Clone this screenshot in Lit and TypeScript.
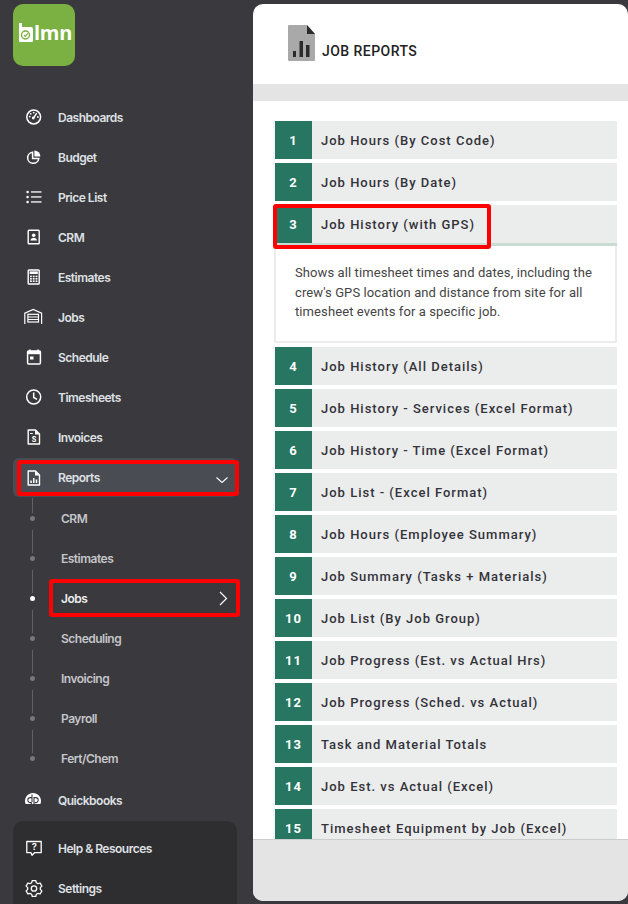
import { LitElement, html, css, svg } from "lit";
import { customElement } from "lit/decorators.js";

const icons: Record<string, unknown> = {
  dash: svg`<circle cx="9.700" cy="10" r="6.900" fill="none" stroke="#fff" stroke-width="1.500"/><path d="M9.700 10.800 12.700 6.200" stroke="#fff" stroke-width="1.500" fill="none"/><circle cx="9.300" cy="11" r="1.400" fill="#fff"/><circle cx="5.700" cy="9.600" r=".9" fill="#fff"/><circle cx="6.700" cy="6.800" r=".9" fill="#fff"/><circle cx="9.700" cy="5.600" r=".9" fill="#fff"/><circle cx="13.900" cy="10" r=".9" fill="#fff"/>`,
  budget: svg`<path d="M8.600 5.200a5.600 5.600 0 1 0 6.200 6.200H8.600Z" fill="none" stroke="#fff" stroke-width="1.500"/><path d="M10.400 3.600a6 6 0 0 1 6 6h-6Z" fill="#fff"/>`,
  list: svg`<g fill="#fff"><circle cx="3.600" cy="5" r="1.300"/><circle cx="3.600" cy="10" r="1.300"/><circle cx="3.600" cy="15" r="1.300"/><rect x="7" y="4.300" width="10.500" height="1.300"/><rect x="7" y="9.300" width="10.500" height="1.300"/><rect x="7" y="14.300" width="10.500" height="1.300"/></g>`,
  crm: svg`<rect x="4.200" y="3.200" width="11" height="13.600" rx=".8" fill="none" stroke="#fff" stroke-width="1.400"/><circle cx="9.700" cy="8.300" r="1.800" fill="#fff"/><path d="M6.400 13.600c.3-2 1.600-2.800 3.300-2.800s3 .8 3.300 2.800Z" fill="#fff"/>`,
  calc: svg`<rect x="4.200" y="3" width="11" height="14" rx=".8" fill="none" stroke="#fff" stroke-width="1.400"/><rect x="5.600" y="4.400" width="8.200" height="2.600" fill="#fff"/><g fill="#fff"><rect x="6" y="8.600" width="1.800" height="1.600"/><rect x="8.800" y="8.600" width="1.800" height="1.600"/><rect x="11.600" y="8.600" width="1.800" height="1.600"/><rect x="6" y="11" width="1.800" height="1.600"/><rect x="8.800" y="11" width="1.800" height="1.600"/><rect x="11.600" y="11" width="1.800" height="1.600"/><rect x="6" y="13.400" width="1.800" height="1.600"/><rect x="8.800" y="13.400" width="1.800" height="1.600"/><rect x="11.600" y="13.400" width="1.800" height="1.600"/></g>`,
  jobs: svg`<path d="M.8 17V6.200L9.200 2.400l8.400 3.800V17" fill="none" stroke="#fff" stroke-width="1.200"/><rect x="3.900" y="7.300" width="10.600" height="7.700" fill="none" stroke="#fff" stroke-width="1.200"/><path d="M3.900 10h10.600M3.900 12.500h10.600" stroke="#fff" stroke-width="1.200"/>`,
  sched: svg`<path d="M6 2.400v3M14 2.400v3" stroke="#fff" stroke-width="1.600"/><rect x="3.600" y="4" width="12.800" height="13" rx="1" fill="none" stroke="#fff" stroke-width="1.500"/><rect x="3.600" y="4" width="12.800" height="3.200" fill="#fff"/><rect x="6" y="9.500" width="3.500" height="3" fill="#fff"/>`,
  clock: svg`<circle cx="9.700" cy="10" r="7" fill="none" stroke="#fff" stroke-width="1.500"/><path d="M9.700 5.500V10.500L13.100 12.300" fill="none" stroke="#fff" stroke-width="1.500"/>`,
  inv: svg`<path d="M4.200 3h7.300l4 4v10H4.200Z" fill="none" stroke="#fff" stroke-width="1.400" stroke-linejoin="round"/><path d="M11 3v4.500h4.500Z" fill="#fff"/><path d="M6 6.500h2.800" stroke="#fff" stroke-width="1"/><text x="9.800" y="15" text-anchor="middle" font-family="Inter,sans-serif" font-size="7" font-weight="700" fill="#fff">S</text>`,
  rep: svg`<path d="M4.200 3h7.300l4 4v10H4.200Z" fill="none" stroke="#fff" stroke-width="1.400" stroke-linejoin="round"/><path d="M11 3v4.500h4.500Z" fill="#fff"/><rect x="6.300" y="12.500" width="1.500" height="2.500" fill="#fff"/><rect x="9" y="10" width="1.500" height="5" fill="#fff"/><rect x="11.700" y="11.500" width="1.500" height="3.500" fill="#fff"/>`,
  qb: svg`<path d="M1.600 14A8 8 0 1 1 16.400 14Z" fill="#fff"/><path d="M8 7.600H6.300a2.500 2.500 0 0 0 0 5H7.300V14M8 4.600V12M10 14V7M10 7.600h1.700a2.500 2.500 0 0 1 0 5H10.800" fill="none" stroke="#3a3a3e" stroke-width="1.100"/>`,
  help: svg`<path d="M2.800 3.500h14.400v11.200H10.500L8 17.200l-1-2.500H2.800Z" fill="none" stroke="#fff" stroke-width="1.300" stroke-linejoin="round"/><text x="10" y="12.300" text-anchor="middle" font-family="Inter,sans-serif" font-size="9.500" font-weight="600" fill="#fff">?</text>`,
  gear: svg`<path d="M8.200 2.600h3.600l.5 2.100 1.800 1 2-.7 1.800 3.100-1.600 1.500v1.800l1.600 1.500-1.800 3.100-2-.7-1.800 1-.5 2.100H8.200l-.5-2.100-1.800-1-2 .7-1.800-3.100 1.600-1.500V9.600L2.100 8.100l1.800-3.100 2 .7 1.800-1Z" fill="none" stroke="#fff" stroke-width="1.300" stroke-linejoin="round"/><circle cx="10" cy="10.500" r="2.700" fill="none" stroke="#fff" stroke-width="1.300"/>`,
};

const top: [string, string][] = [
  ["dash", "Dashboards"], ["budget", "Budget"], ["list", "Price List"], ["crm", "CRM"],
  ["calc", "Estimates"], ["jobs", "Jobs"], ["sched", "Schedule"], ["clock", "Timesheets"], ["inv", "Invoices"],
];
const subs = ["CRM", "Estimates", "Jobs", "Scheduling", "Invoicing", "Payroll", "Fert/Chem"];
const before = ["Job Hours (By Cost Code)", "Job Hours (By Date)"];
const after = [
  "Job History (All Details)", "Job History - Services (Excel Format)", "Job History - Time (Excel Format)",
  "Job List - (Excel Format)", "Job Hours (Employee Summary)", "Job Summary (Tasks + Materials)",
  "Job List (By Job Group)", "Job Progress (Est. vs Actual Hrs)", "Job Progress (Sched. vs Actual)",
  "Task and Material Totals", "Job Est. vs Actual (Excel)", "Timesheet Equipment by Job (Excel)",
];

@customElement("app-root")
export class AppRoot extends LitElement {
  static styles = css`
    :host { display: block; width: 628px; height: 904px; overflow: hidden; background: #3a3a3e; }
    * { box-sizing: border-box; }
    .page { display: flex; height: 904px; }
    .side { width: 253px; flex: none; display: flex; flex-direction: column; font-family: Inter, sans-serif; color: #dfe0e4; font-size: 12px; font-weight: 600; letter-spacing: -.5px; height: 904px; overflow: hidden; }
    .logo { flex: none; margin: 4px 0 0 13px; width: 62px; height: 62px; border-radius: 10px; background: #7bb042; display: flex; align-items: flex-start; justify-content: flex-start; padding: 19px 0 0 6px; color: #fff; font: 700 20px/20px "Open Sans", sans-serif; }
    .logo svg { width: 14px; height: 19px; flex: none; }
    .logo span { letter-spacing: -.3px; margin-left: 1px; }
    nav { margin-top: 31px; display: flex; flex-direction: column; flex: none; }
    .item { height: 40px; display: flex; align-items: center; padding-left: 24px; position: relative; flex: none; }
    .item svg.ico { width: 20px; height: 20px; margin-right: 14px; flex: none; }
    .reports { margin: 1px 16px 0 13px; height: 39px; padding-left: 11px; border-radius: 6px; background: #4a4c54; }
    .reports .chev { position: absolute; left: 203px; top: 19px; width: 12px; height: 6px; }
    .subs { margin-top: 1px; display: flex; flex-direction: column; }
    .sub { height: 40px; display: flex; align-items: center; padding-left: 61px; color: #c4c5c9; position: relative; }
    .sub::before { content: ""; position: absolute; left: 32px; top: -8px; height: 23px; width: 1px; background: #626266; }
    .sub:first-child::before { top: 0; height: 15px; }
    .sub::after { content: ""; position: absolute; left: 30px; top: 18px; width: 5px; height: 5px; border-radius: 50%; background: #77777b; }
    .sub.on { color: #eceded; }
    .sub.on::after { background: #fff; }
    .sub .chev { position: absolute; left: 219px; top: 13px; width: 9px; height: 15px; }
    .qb { margin-top: 2px; }
    .bottom { margin: 1px 16px 0 13px; padding-top: 7px; background: #2e2e30; border-radius: 10px 10px 0 0; flex: 1; }
    .bottom .item { padding-left: 11px; }
    .hl { position: absolute; border: 4px solid #ff0000; border-radius: 3px; pointer-events: none; z-index: 2; }
    .hl-rep { left: 4px; top: 2px; width: 222px; height: 36px; }
    .hl-jobs { left: 49px; top: 1px; width: 191px; height: 38px; }
    .main { width: 375px; height: 897px; margin-top: 4px; flex: none; background: #fff; border-radius: 10px; overflow: hidden; display: flex; flex-direction: column; font-family: Roboto, sans-serif; }
    .head { height: 80px; flex: none; display: flex; align-items: center; padding: 0 0 0 35px; }
    .head svg { width: 27px; height: 36px; margin: 0 7px 2px 0; flex: none; }
    .head b { font: 500 14px Roboto, sans-serif; color: #222; margin-top: 13px; letter-spacing: .45px; }
    .band { height: 17px; flex: none; background: #e4e4e4; }
    .list { flex: 1; overflow: hidden; padding: 20px 11px 0 20px; display: flex; flex-direction: column; min-height: 0; }
    .row { display: flex; flex: none; height: 38px; margin-bottom: 4px; background: #ebecec; border-left: 2px solid #f5f6f6; position: relative; font: 500 13px Roboto, sans-serif; letter-spacing: 1px; color: #33333a; align-items: center; }
    .num { width: 37px; height: 100%; flex: none; background: #277661; color: #fff; display: flex; align-items: center; justify-content: center; font-weight: 700; margin-right: 9px; }
    .row.open { margin-bottom: 0; border-bottom: 3px solid #c8dcd4; height: 41px; }
    .desc { flex: none; height: 97px; margin: 0 0 4px 1px; border: 2px solid #ececec; border-top: 0; padding: 17px 8px 0 19px; font: 400 13px/19.500px Roboto, sans-serif; letter-spacing: .1px; color: #444; }
    .hl-row { left: -2px; top: -1px; width: 218px; height: 45px; }
    .foot { height: 62px; flex: none; background: #e4e4e4; border-top: 1px solid #cdcdcd; }
  `;

  private icon(k: string) {
    return html`<svg class="ico" viewBox="0 0 20 20">${icons[k]}</svg>`;
  }

  private row(n: number, t: string) {
    return html`<div class="row"><div class="num">${n}</div><span>${t}</span></div>`;
  }

  render() {
    return html`<div class="page">
      <aside class="side">
        <div class="logo">
          <svg viewBox="0 0 14 19"><path d="M0 0h3v4h9a2 2 0 0 1 2 2v12a1 1 0 0 1-1 1H1a1 1 0 0 1-1-1Z" fill="#fff"/><circle cx="6.500" cy="12" r="4" fill="none" stroke="#7bb042" stroke-width="1.400"/><path d="M5 12l1.400 1.400 2.400-3" fill="none" stroke="#7bb042" stroke-width="1.200"/></svg>
          <span>lmn</span>
        </div>
        <nav>
          ${top.map(([k, t]) => html`<div class="item">${this.icon(k)}${t}</div>`)}
          <div class="item reports">${this.icon("rep")}Reports
            <svg class="chev" viewBox="0 0 12 6"><path d="M.5.5 6 5.500 11.500.5" fill="none" stroke="#fff" stroke-width="1.100"/></svg>
            <div class="hl hl-rep"></div>
          </div>
          <div class="subs">
            ${subs.map((s) => html`<div class="sub ${s === "Jobs" ? "on" : ""}">${s}
              ${s === "Jobs" ? html`<svg class="chev" viewBox="0 0 9 15"><path d="M1 1l6.500 6.500L1 14" fill="none" stroke="#fff" stroke-width="1.200"/></svg><div class="hl hl-jobs"></div>` : ""}
            </div>`)}
          </div>
          <div class="item qb">${this.icon("qb")}Quickbooks</div>
        </nav>
        <div class="bottom">
          <div class="item">${this.icon("help")}Help &amp; Resources</div>
          <div class="item">${this.icon("gear")}Settings</div>
        </div>
      </aside>
      <main class="main">
        <div class="head">
          <svg viewBox="0 0 27 36"><path d="M1 0h18l8 9v26a1 1 0 0 1-1 1H1a1 1 0 0 1-1-1V1a1 1 0 0 1 1-1Z" fill="#a9a9a9"/><path d="M19 0l8 9h-8Z" fill="#2b2b2b"/><rect x="5" y="26" width="3" height="6" fill="#2b2b2b"/><rect x="11.500" y="16" width="3.500" height="16" fill="#2b2b2b"/><rect x="18" y="20" width="3.500" height="12" fill="#2b2b2b"/></svg>
          <b>JOB REPORTS</b>
        </div>
        <div class="band"></div>
        <div class="list">
          ${before.map((t, i) => this.row(i + 1, t))}
          <div class="row open">
            <div class="num">3</div><span>Job History (with GPS)</span>
            <div class="hl hl-row"></div>
          </div>
          <div class="desc">Shows all timesheet times and dates, including the crew's GPS location and distance from site for all timesheet events for a specific job.</div>
          ${after.map((t, i) => this.row(i + 4, t))}
        </div>
        <div class="foot"></div>
      </main>
    </div>`;
  }
}
